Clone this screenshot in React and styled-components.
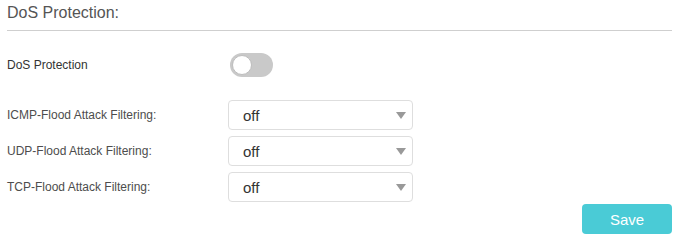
import React, { useState } from "react";
import styled, { createGlobalStyle } from "styled-components";

const Global = createGlobalStyle`
  html, body { margin: 0; padding: 0; background: #fff; }
  body { font-family: "Liberation Sans", Arial, sans-serif; }
`;

const Page = styled.div`
  width: 665px;
  padding-left: 7px;
`;

const Title = styled.h2`
  margin: 0;
  padding: 4px 0 8px;
  font-size: 16px;
  line-height: 18px;
  font-weight: normal;
  color: #555;
  border-bottom: 1px solid #cfcfcf;
`;

const Form = styled.div`
  display: flex;
  flex-direction: column;
`;

const Row = styled.div`
  display: grid;
  grid-template-columns: 221px 185px;
  align-items: center;
  height: ${(p) => p.$h}px;
  margin-top: ${(p) => p.$mt}px;
`;

const Label = styled.label`
  font-size: 12px;
  color: ${(p) => (p.$dark ? "#333" : "#4d4d4d")};
`;

const Track = styled.button`
  position: relative;
  margin-left: 2px;
  width: 43px;
  height: 24px;
  border: none;
  border-radius: 12px;
  background: ${(p) => (p.$on ? "#4acbd6" : "#c9c9c9")};
  padding: 0;
  cursor: pointer;
`;

const Knob = styled.span`
  position: absolute;
  top: 2px;
  left: ${(p) => (p.$on ? "21px" : "2px")};
  width: 20px;
  height: 20px;
  border-radius: 50%;
  background: #fff;
  box-sizing: border-box;
  border: 1px solid #bdbdbd;
`;

const SelectWrap = styled.div`
  position: relative;
  width: 185px;
  height: 30px;
`;

const Select = styled.select`
  appearance: none;
  -webkit-appearance: none;
  width: 100%;
  height: 100%;
  box-sizing: border-box;
  border: 1px solid #dedede;
  border-radius: 4px;
  background: #fff;
  padding: 0 24px 0 14px;
  font-family: "Liberation Sans", Arial, sans-serif;
  font-size: 15px;
  color: #333;
  outline: none;
`;

const Arrow = styled.svg`
  position: absolute;
  right: 7px;
  top: 12px;
  pointer-events: none;
`;

const Footer = styled.div`
  display: flex;
  justify-content: flex-end;
  margin-top: 2px;
`;

const SaveButton = styled.button`
  width: 90px;
  height: 30px;
  border: none;
  border-radius: 4px;
  background: #4acbd6;
  color: #fff;
  font-family: "Liberation Sans", Arial, sans-serif;
  font-size: 15px;
  cursor: pointer;
`;

function Dropdown() {
  return (
    <SelectWrap>
      <Select defaultValue="off">
        <option value="off">off</option>
        <option value="low">low</option>
        <option value="middle">middle</option>
        <option value="high">high</option>
      </Select>
      <Arrow width="10" height="7" viewBox="0 0 10 7">
        <polygon points="0,0 10,0 5,7" fill="#999" />
      </Arrow>
    </SelectWrap>
  );
}

export default function App() {
  const [on, setOn] = useState(false);
  const filters = [
    "ICMP-Flood Attack Filtering:",
    "UDP-Flood Attack Filtering:",
    "TCP-Flood Attack Filtering:",
  ];
  return (
    <Page>
      <Global />
      <Title>DoS Protection:</Title>
      <Form>
        <Row $h={24} $mt={22}>
          <Label $dark>DoS Protection</Label>
          <Track $on={on} onClick={() => setOn(!on)} aria-label="DoS Protection">
            <Knob $on={on} />
          </Track>
        </Row>
        {filters.map((f, i) => (
          <Row key={f} $h={30} $mt={i === 0 ? 23 : 6}>
            <Label>{f}</Label>
            <Dropdown />
          </Row>
        ))}
        <Footer>
          <SaveButton>Save</SaveButton>
        </Footer>
      </Form>
    </Page>
  );
}
